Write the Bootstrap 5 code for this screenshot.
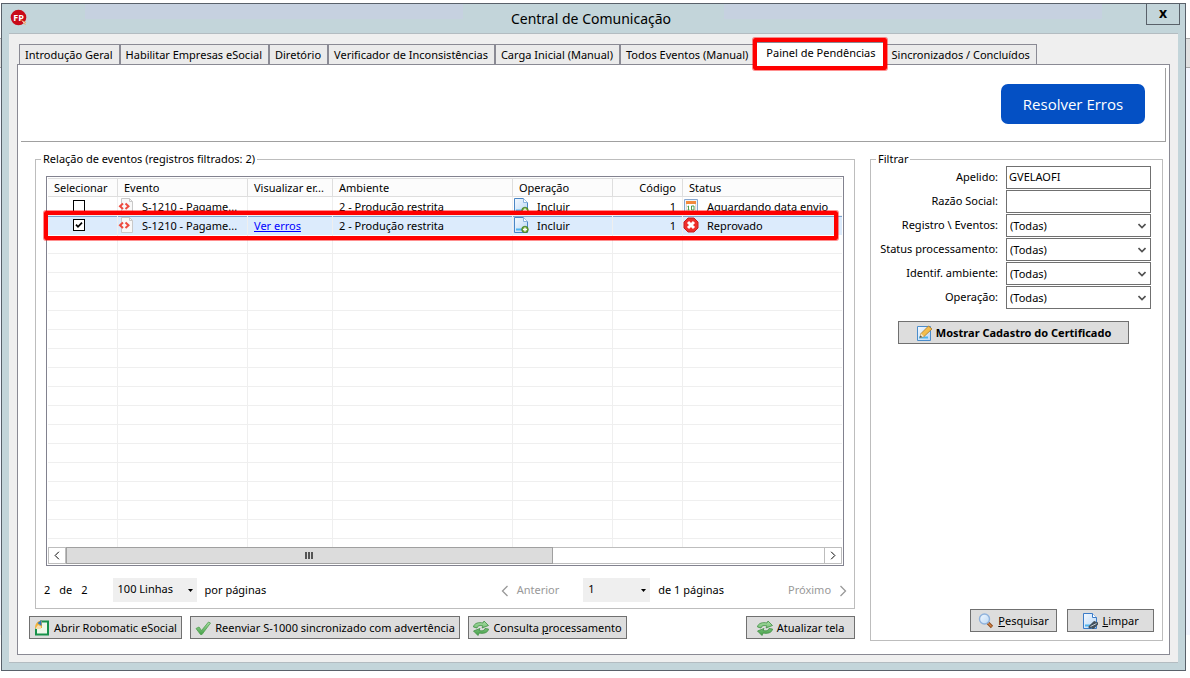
<!DOCTYPE html>
<html lang="pt-BR">
<head>
<meta charset="utf-8">
<meta name="viewport" content="width=device-width, initial-scale=1">
<title>Central de Comunicação</title>
<link href="https://cdn.jsdelivr.net/npm/bootstrap@5.3.0/dist/css/bootstrap.min.css" rel="stylesheet">
<style>
  body { font: 11px/16px "Noto Sans", "Open Sans", sans-serif; color: #000; padding: 3px 4px 7px 1px;
    background: linear-gradient(#fff 38px, #a9a9a9 38px 39px, #e1e1e1 39px 67px, #a9a9a9 67px 68px, #f3f6ff 68px 635px, #fff 635px) no-repeat #fff; }
  button, input, select { font: inherit; color: inherit; }
  .app-window { border: 1px solid #59616a; background: #c3d5da; }
  .title-bar { height: 29px; background: linear-gradient(90deg, #c3d5da 7%, #c6d1e0 7% 39%, #c3d5da 39% 61%, #c6d1e0 61% 93%, #c3d5da 93%) top / 100% 15px no-repeat; }
  .title-bar h1 { font-size: 14px; line-height: 29px; }
  .title-side { width: 34px; }
  .btn-close-x { width: 34px; height: 21px; margin-right: 5px; border: 1px solid #59616a; border-top: 0; background: #c3d5da; font: 700 14px/14px "Open Sans", sans-serif; padding: 0 0 2px; }
  .client { background: #efefef; margin: 0 7px 7px; border: 1px solid #b3bcc1; border-width: 1px 0; padding: 8px 8px 7px; }
  .tab-strip { height: 22px; margin: 0 2px; }
  .tab-item { border: 1px solid #8a8a94; border-bottom: 0; background: #ebebeb; height: 20px; padding: 0 6px 0 5px; color: #000; line-height: 20px; white-space: nowrap; text-decoration: none; }
  .tab-item.current { background: #fff; height: 23px; margin-bottom: -1px; padding: 0 9px 0 10px; z-index: 1; }
  .page-panel { background: #fff; border: 1px solid #8a8a94; padding-bottom: 13px; }
  .hero-strip { height: 74px; margin: 3px 3px 0; border: 1px solid #a0a0a0; border-width: 0 1px 1px 0; padding: 16px 20px 0 0; }
  .btn-resolve { width: 144px; height: 40px; background: #0450c4; color: #fff; border: 0; border-radius: 7px; font: 15px/20px "Open Sans", sans-serif; }
  .work-area { gap: 15px; padding: 9px 6px 0 11px; }
  .list-col { min-width: 0; }
  .filter-col { flex: 0 0 293px; }
  .group { border: 1px solid #bdbdbd; }
  .group > legend { font-size: 11px; line-height: 16px; margin: 0 0 0 5px; padding: 0 2px; float: none; width: auto; }
  .list-group-box { margin: 0 0 7px 6px; }
  .group-body { padding: 9px 10px 0; }
  .grid-frame { border: 1px solid #82828f; padding: 1px; }
  .grid-events { table-layout: fixed; width: 100%; border-collapse: separate; border-spacing: 0; }
  .grid-events th, .grid-events td { height: 19px; line-height: 17px; padding: 0 6px; border: 0 solid #efefef; border-width: 0 1px 1px 0; font-weight: 400; white-space: nowrap; overflow: hidden; }
  .grid-events th { background: #fcfcfc; border: 1px solid #dedede; border-left: 0; line-height: 16px; }
  .grid-events th:last-child, .grid-events td:last-child { border-right: 0; overflow: visible; }
  .grid-events .stub td { height: 8px; border-bottom: 0; line-height: 1px; }
  .grid-events .chosen { position: relative; }
  .grid-events .chosen td { background: #dcebfc; border-bottom-color: #dcebfc; box-shadow: inset 0 1px #7da2ce; }
  .grid-events td.with-icon { padding-left: 0; padding-right: 0; }
  .cell-flex { display: flex; align-items: center; height: 17px; }
  .grid-events svg { width: 16px; height: 16px; margin-right: 8px; flex: none; }
  .grid-events a { color: #00f; }
  .tick { appearance: none; width: 12px; height: 12px; border: 1px solid #000; background: #fff center / 10px no-repeat; display: block; margin: 0 0 0 19px; }
  .tick:checked { background-image: url("data:image/svg+xml,%3Csvg xmlns='http://www.w3.org/2000/svg' viewBox='0 0 10 10'%3E%3Cpath d='M2 4.6l2 2.2 4-4.2' fill='none' stroke='%23000' stroke-width='1.7'/%3E%3C/svg%3E"); }
  .callout-red { position: absolute; border: 4px solid #f00; border-radius: 2px; box-shadow: 0 0 0 1px #ff000070; pointer-events: none; z-index: 2; }
  .callout-row { inset: -5px 4px -5px -4px; }
  .callout-tab { inset: -5px -2px -5px -3px; }
  .h-scroll { height: 17px; border: 1px solid #bdbdbd; background: #fff; }
  .h-scroll button { width: 16px; border: 0; background: #fff; padding: 0; line-height: 0; }
  .thumb { border: 1px solid #a0a0a0; margin: -1px 0; background: #dcdcdc; }
  .track { border: 0 solid #bdbdbd; border-width: 0 1px; }
  .pager { height: 42px; padding-top: 5px; margin: 0 -3px 0 -2px; }
  .pager-count { gap: 9px; margin-right: 25px; }
  .pager select { appearance: none; border: 0; border-radius: 0; background: #efefef url("data:image/svg+xml,%3Csvg xmlns='http://www.w3.org/2000/svg' width='5' height='3'%3E%3Cpath d='M0 0h5L2.5 3z'/%3E%3C/svg%3E") right 4px bottom 10px no-repeat; padding: 0 5px 2px; height: 24px; }
  .lines-select { width: 84px; }
  .page-select { width: 67px; }
  .pager-link { border: 0; background: none; color: #999; padding: 0; }
  .btn-win { height: 23px; border: 1px solid #707070; background: #ddd; padding: 0 2px; display: inline-flex; align-items: center; justify-content: center; white-space: nowrap; gap: 4px; }
  .btn-win svg { width: 16px; height: 16px; flex: none; }
  .w-open { width: 153px; } .w-resend { width: 270px; } .w-query { width: 159px; } .w-refresh { width: 109px; }
  .w-cert { width: 231px; } .w-small { width: 87px; }
  .filter-grid { display: grid; grid-template-columns: 1fr 145px; gap: 1px 8px; padding-right: 11px; margin-top: -1px; }
  .filter-grid label { text-align: right; line-height: 22px; white-space: nowrap; }
  .filter-grid input, .filter-grid select { appearance: none; height: 23px; border: 1px solid #707070; border-radius: 0; background: #fff; padding: 0 3px; min-width: 0; }
  .filter-grid input { padding: 0 2px 2px; }
  .filter-grid select { background: #fff url("data:image/svg+xml,%3Csvg xmlns='http://www.w3.org/2000/svg' width='8' height='6'%3E%3Cpath d='M.5 1L4 4.500 7.500 1' fill='none' stroke='%23505050' stroke-width='1.600'/%3E%3C/svg%3E") right 4px center no-repeat; }
  .filter-actions { padding: 12px 8px 8px 27px; }
  .pair { gap: 10px; }
</style>
</head>
<body class="min-vh-100 d-flex">
<svg width="0" height="0" class="position-absolute" aria-hidden="true">
  <defs>
    <linearGradient id="paper" x1="0" y1="0" x2="1" y2="1"><stop offset="0" stop-color="#f4f9ff"/><stop offset="1" stop-color="#b9d7f5"/></linearGradient>
    <linearGradient id="leaf" x1="0" y1="0" x2="0" y2="1"><stop offset="0" stop-color="#a9dfa5"/><stop offset="1" stop-color="#44a048"/></linearGradient>
  </defs>
  <symbol id="i-xml" viewBox="0 0 16 16"><path d="M3.500.5h8l3 3v12h-11z" fill="#f8f8f8" stroke="#c9c9c9"/><path d="M11.500.5v3h3" fill="none" stroke="#c9c9c9"/><path d="M5 5.500L2 8.300l3 2.800M7.500 5.500l3 2.800-3 2.800" fill="none" stroke="#ee4b3f" stroke-width="2"/></symbol>
  <symbol id="i-add" viewBox="0 0 16 16"><path d="M1.500.5h9l4 4v11h-13z" fill="url(#paper)" stroke="#4a86c5"/><path d="M10.500.5v4h4" fill="#fff" stroke="#8ab4de"/><path d="M3 12.500h6" stroke="#4fb4ee" stroke-width="2"/><circle cx="12" cy="12.500" r="3.300" fill="#6ba637" stroke="#3f7520" stroke-width=".7"/><path d="M12 10.500v4M10 12.500h4" stroke="#fff" stroke-width="1.400"/></symbol>
  <symbol id="i-cal" viewBox="0 0 16 16"><path d="M1.500 1.500h13v13h-13z" fill="#eef4fc" stroke="#86a6cf"/><path d="M3 3h10v3H3z" fill="#f28a3c"/><path d="M3.500 6v7.500h9V6" fill="#fff" stroke="#e6c9b5" stroke-width=".7"/><path d="M5.500 8v4M4.500 12h2M5.500 8l-1 .6M8.500 8h2.500v4H8.500z" fill="none" stroke="#4c9a4c"/></symbol>
  <symbol id="i-err" viewBox="0 0 16 16"><path d="M5 1h6l4 4v6l-4 4H5l-4-4V5z" fill="#ee2f2b" stroke="#c81e1e"/><path d="M5 5l6 6M11 5l-6 6" stroke="#fff" stroke-width="3"/></symbol>
  <symbol id="i-open" viewBox="0 0 16 16"><path d="M6 1.500h8v13H2V8" fill="#eef8ea" stroke="#17914a" stroke-width="2"/><path d="M1 8C1 4 4 0 8 1v7z" fill="#f0b23a"/><path d="M3.500 3L7.500 0v6z" fill="#2f79bd"/><path d="M1 9l3-4 3 1.500V9z" fill="#f6ddae"/></symbol>
  <symbol id="i-check" viewBox="0 0 16 16"><path d="M1 8.500l3-1.500 2.500 3.500L13.500 2l2 1L7 14.500H5.500z" fill="url(#leaf)" stroke="#4fa04e" stroke-width=".8"/></symbol>
  <symbol id="i-sync" viewBox="0 0 16 16"><path d="M.5 7C1 3 6 2 10 3l1-2 4.500 4.500L9 8l1-2C7 5 4.500 5.500 4 8zM15.500 9C15 13 10 14 6 13l-1 2.500L.5 11 7 8.500 6 10.500c3 .8 5.500.3 6-2z" fill="url(#leaf)" stroke="#3f8e42" stroke-width=".8"/></symbol>
  <symbol id="i-edit" viewBox="0 0 16 16"><path d="M1.500 1.500h13v14h-13z" fill="url(#paper)" stroke="#4a8ccb"/><path d="M3 12.500h9" stroke="#4fb4ee" stroke-width="2"/><path d="M4 12.500L5 8.500 12.500 1 16 4 8 11.500z" fill="#f4bd4c" stroke="#a8792b" stroke-width=".8"/><path d="M4 12.500l1-4 3 3z" fill="#f5e6c8"/><path d="M4 12.500l.5-2 1.500 1.500z" fill="#333"/></symbol>
  <symbol id="i-search" viewBox="0 0 16 16"><path d="M9.500 9.500l4.500 4.500" stroke="#8d4b1c" stroke-width="3.200"/><path d="M9.500 9.500l4 4" stroke="#d98a4b" stroke-width="1.300"/><circle cx="6.500" cy="6" r="5" fill="url(#paper)" stroke="#8fb2dc" stroke-width="1.400"/></symbol>
  <symbol id="i-clear" viewBox="0 0 16 16"><path d="M1.500.5h9l4 4v11h-13z" fill="url(#paper)" stroke="#3c7cc8"/><path d="M10.500.5v4h4" fill="#fff" stroke="#3c7cc8"/><path d="M3 12.500h6" stroke="#4fb4ee" stroke-width="2"/><path d="M8 14l4.500-4.500M11 14.500l4-4" stroke="#42505c" stroke-width="3" stroke-linecap="round"/><path d="M8.500 13.500l6-3" stroke="#c3ccd4"/></symbol>
  <symbol id="i-left" viewBox="0 0 8 12"><path d="M6.500 1L1.500 6l5 5" fill="none" stroke="currentColor" stroke-width="1.300"/></symbol>
  <symbol id="i-right" viewBox="0 0 8 12"><path d="M1.500 1l5 5-5 5" fill="none" stroke="currentColor" stroke-width="1.300"/></symbol>
</svg>

<main class="app-window flex-fill d-flex flex-column">
  <header class="title-bar d-flex">
    <div class="title-side pt-1 ps-2">
      <svg width="18" height="18" viewBox="0 0 18 18" aria-hidden="true"><circle cx="8.500" cy="9.500" r="7.800" fill="#c90a18"/><text x="8.500" y="12.500" text-anchor="middle" font-size="9" font-weight="700" font-family="Open Sans, sans-serif" fill="#fff">FP</text><path d="M11.500 12.500l4.500 2-2 .5 1.500 2" fill="#fff" stroke="#f0a050" stroke-width=".7"/></svg>
    </div>
    <h1 class="flex-fill text-center fw-normal m-0">Central de Comunicação</h1>
    <button type="button" class="btn-close-x" aria-label="Fechar">x</button>
  </header>

  <div class="client flex-fill d-flex flex-column">
    <nav class="tab-strip d-flex align-items-end" aria-label="Seções">
      <a class="tab-item" href="#">Introdução Geral</a>
      <a class="tab-item" href="#">Habilitar Empresas eSocial</a>
      <a class="tab-item" href="#">Diretório</a>
      <a class="tab-item" href="#">Verificador de Inconsistências</a>
      <a class="tab-item" href="#">Carga Inicial (Manual)</a>
      <a class="tab-item" href="#">Todos Eventos (Manual)</a>
      <a class="tab-item current position-relative" href="#" aria-current="page">Painel de Pendências<span class="callout-red callout-tab"></span></a>
      <a class="tab-item" href="#">Sincronizados / Concluídos</a>
    </nav>

    <div class="page-panel flex-fill d-flex flex-column">
      <div class="hero-strip d-flex justify-content-end align-items-start">
        <button type="button" class="btn-resolve">Resolver Erros</button>
      </div>

      <div class="work-area flex-fill d-flex">
        <section class="list-col flex-fill d-flex flex-column">
          <fieldset class="group list-group-box">
            <legend>Relação de eventos (registros filtrados: 2)</legend>
            <div class="group-body">
              <div class="grid-frame">
                <table class="grid-events" id="events">
                  <colgroup><col style="width:70px"><col style="width:130px"><col style="width:85px"><col style="width:180px"><col style="width:100px"><col style="width:70px"><col></colgroup>
                  <thead>
                    <tr><th>Selecionar</th><th>Evento</th><th>Visualizar er...</th><th>Ambiente</th><th>Operação</th><th class="text-end">Código</th><th>Status</th></tr>
                  </thead>
                  <tbody>
                    <tr>
                      <td><input type="checkbox" class="tick" aria-label="Selecionar evento 1"></td>
                      <td class="with-icon"><div class="cell-flex"><svg><use href="#i-xml"/></svg>S-1210 - Pagame...</div></td>
                      <td></td><td>2 - Produção restrita</td>
                      <td class="with-icon"><div class="cell-flex"><svg><use href="#i-add"/></svg>Incluir</div></td>
                      <td class="text-end">1</td>
                      <td class="with-icon"><div class="cell-flex"><svg><use href="#i-cal"/></svg>Aguardando data envio</div></td>
                    </tr>
                    <tr class="chosen">
                      <td><input type="checkbox" class="tick" checked aria-label="Selecionar evento 2"></td>
                      <td class="with-icon"><div class="cell-flex"><svg><use href="#i-xml"/></svg>S-1210 - Pagame...</div></td>
                      <td><a href="#">Ver erros</a></td><td>2 - Produção restrita</td>
                      <td class="with-icon"><div class="cell-flex"><svg><use href="#i-add"/></svg>Incluir</div></td>
                      <td class="text-end">1</td>
                      <td class="with-icon"><div class="cell-flex"><svg><use href="#i-err"/></svg>Reprovado</div><span class="callout-red callout-row"></span></td>
                    </tr>
                  </tbody>
                </table>
                <div class="h-scroll d-flex">
                  <button type="button" aria-label="Rolar para a esquerda"><svg width="6" height="9"><use href="#i-left"/></svg></button>
                  <div class="track flex-fill d-flex">
                    <div class="thumb d-flex align-items-center justify-content-center" style="width:64.2%"><svg width="8" height="7"><path d="M1 0v7M4 0v7M7 0v7" stroke="#555" stroke-width="2"/></svg></div>
                  </div>
                  <button type="button" aria-label="Rolar para a direita"><svg width="6" height="9"><use href="#i-right"/></svg></button>
                </div>
              </div>
              <div class="pager d-flex align-items-center justify-content-between">
                <div class="d-flex align-items-center">
                  <div class="pager-count d-flex"><span>2</span><span>de</span><span>2</span></div>
                  <select class="lines-select me-2" id="lines"><option>100 Linhas</option></select>
                  <label for="lines">por páginas</label>
                </div>
                <div class="d-flex align-items-center">
                  <button type="button" class="pager-link me-4"><svg class="me-2" width="8" height="12"><use href="#i-left"/></svg>Anterior</button>
                  <select class="page-select me-2" id="pg"><option>1</option></select>
                  <label class="me-5" for="pg">de 1 páginas</label>
                  <button type="button" class="pager-link ms-3">Próximo<svg class="ms-2" width="8" height="12"><use href="#i-right"/></svg></button>
                </div>
              </div>
            </div>
          </fieldset>
          <div class="d-flex gap-2">
            <button type="button" class="btn-win w-open"><svg><use href="#i-open"/></svg>Abrir Robomatic eSocial</button>
            <button type="button" class="btn-win w-resend"><svg><use href="#i-check"/></svg>Reenviar S-1000 sincronizado com advertência</button>
            <button type="button" class="btn-win w-query"><svg><use href="#i-sync"/></svg><span>Consulta <u>p</u>rocessamento</span></button>
            <button type="button" class="btn-win w-refresh ms-auto"><svg><use href="#i-sync"/></svg>Atualizar tela</button>
          </div>
        </section>

        <fieldset class="group filter-col d-flex flex-column">
          <legend>Filtrar</legend>
          <div class="filter-grid">
            <label for="f1">Apelido:</label><input id="f1" type="text" value="GVELAOFI">
            <label for="f2">Razão Social:</label><input id="f2" type="text">
            <label for="f3">Registro \ Eventos:</label><select id="f3"><option>(Todas)</option></select>
            <label for="f4">Status processamento:</label><select id="f4"><option>(Todas)</option></select>
            <label for="f5">Identif. ambiente:</label><select id="f5"><option>(Todas)</option></select>
            <label for="f6">Operação:</label><select id="f6"><option>(Todas)</option></select>
          </div>
          <div class="filter-actions d-flex flex-column flex-fill">
            <button type="button" class="btn-win w-cert fw-bold"><svg><use href="#i-edit"/></svg>Mostrar Cadastro do Certificado</button>
            <div class="d-flex justify-content-end mt-auto pair">
              <button type="button" class="btn-win w-small"><svg><use href="#i-search"/></svg><span><u>P</u>esquisar</span></button>
              <button type="button" class="btn-win w-small"><svg><use href="#i-clear"/></svg><span><u>L</u>impar</span></button>
            </div>
          </div>
        </fieldset>
      </div>
    </div>
  </div>
</main>
<script>
  // Fill the grid with empty rows; the last one is cut by the scroll bar.
  const body = document.querySelector('#events tbody');
  for (let i = 0; i < 17; i++) {
    const row = body.insertRow();
    for (let c = 0; c < 7; c++) row.insertCell();
    if (i === 16) row.className = 'stub';
  }
</script>
<script src="https://cdn.jsdelivr.net/npm/bootstrap@5.3.0/dist/js/bootstrap.bundle.min.js"></script>
</body>
</html>
